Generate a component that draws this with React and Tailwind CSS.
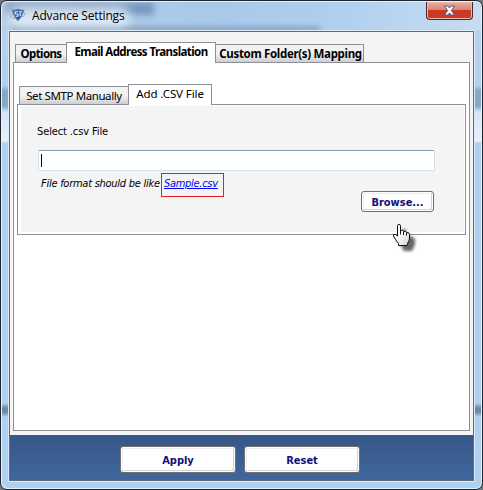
import { useState } from 'react';
import clsx from 'clsx';

function AppLogo() {
  return (
    <svg width="16" height="14" viewBox="0 0 16 14">
      <ellipse cx="8" cy="7" rx="7.3" ry="2.8" fill="none" stroke="#8996a8" strokeWidth="1" strokeDasharray="2 1" transform="rotate(-12 8 7)" />
      <path d="M1.500 1.5 Q5.500 2 8 0.500 Q10.500 2 14.500 1.500 Q13 8.500 8 13.500 Q3 8.500 1.500 1.500Z" fill="#7386a3" />
      <path d="M3.500 2.500 Q8 1.800 12.500 2.500 Q12 8 8 11.800 Q4 8 3.500 2.500Z" fill="#1f59ac" />
      <path d="M8 3.800 H5.200 V6 H8 V8.200 H5.800 M8.800 3.800 H11.800 M10.200 3.800 V8" fill="none" stroke="#e3efff" strokeWidth="1.100" />
    </svg>
  );
}

function CloseIcon() {
  return (
    <svg width="13" height="11" viewBox="0 0 13 11">
      <path
        d="M1.500 1 H4.800 L6.500 3 L8.200 1 H11.500 L8.400 5.500 L11.500 10 H8.200 L6.500 8 L4.800 10 H1.500 L4.600 5.500Z"
        fill="#fff"
        stroke="#5b5470"
        strokeWidth="1"
      />
    </svg>
  );
}

function HandCursor() {
  return (
    <svg className="absolute left-[392px] top-[222px] overflow-visible" width="25" height="30" viewBox="0 0 25 30">
      <defs>
        <linearGradient id="handFill" x1="0" y1="0" x2="1" y2="1">
          <stop offset="0.4" stopColor="#fff" />
          <stop offset="1" stopColor="#d0d0d0" />
        </linearGradient>
        <filter id="handShadow" x="-50%" y="-50%" width="220%" height="220%">
          <feDropShadow dx="5" dy="5" stdDeviation="1.8" floodColor="#000" floodOpacity="0.6" />
        </filter>
      </defs>
      <path
        filter="url(#handShadow)"
        d="M5.500 14 V3.500 Q5.500 2.500 7 2.500 Q8.500 2.500 8.500 3.500 V8.500 Q11.500 7.500 11.500 9.500 Q14.500 8.500 14.500 10.500 Q17.500 10 17.500 12.500 V16 Q17.500 18.500 16 20.500 L15 23.500 H6.500 V21.500 L4.500 19 L1.500 14 Q0.800 11.500 3.500 12.500Z"
        fill="url(#handFill)"
        stroke="#111"
        strokeLinejoin="round"
      />
      <path d="M8.500 8 V12.500 M11.500 9.500 V13 M14.500 10.500 V13.500" stroke="#111" fill="none" />
    </svg>
  );
}

function Tab({ label, active, onClick, className }) {
  return (
    <button
      onClick={onClick}
      className={clsx(
        'flex shrink-0 justify-center border border-[#8c8e99] leading-[16px] whitespace-nowrap text-black',
        active ? 'h-[21px] border-b-0 bg-white pt-px' : 'h-[19px] bg-linear-to-b from-[#f2f2f2] from-50% to-[#cfcfcf] pt-px',
        className
      )}
    >
      {label}
    </button>
  );
}

function Button({ children, className }) {
  return (
    <button
      className={clsx(
        'flex items-center justify-center rounded-[3px] border border-[#707070] bg-white pt-[3px] font-bold text-[#10107b] shadow-[inset_0_0_0_1px_#fff,inset_-2px_-2px_0_#d4d2d7,inset_2px_2px_0_#eeedf0]',
        className
      )}
    >
      {children}
    </button>
  );
}

export default function App() {
  const [tab, setTab] = useState('translation');
  const [innerTab, setInnerTab] = useState('csv');

  return (
    <div className="relative h-[490px] w-[483px] overflow-hidden bg-[#71747a]">
      <div className="flex h-[490px] w-[483px] flex-col rounded-[7px] border border-[#1c2430] bg-[#b3d2f1] bg-[linear-gradient(180deg,#bad2eb_0px,#b4d0ec_84px,#84a9c8_90px,#84a9c8_105px,#d5e5f4_111px,#e6f0fa_140px,#afd1f1_142px,#afd1f1_402px,#71879d_407px,#71879d_411px,#afd1f1_416px)] px-[8px] pb-[8px] shadow-[inset_0_0_0_1px_#e5f2fb]">
        {/* Title bar */}
        <div className="relative -mx-[7px] mt-px flex h-[28px] shrink-0 overflow-hidden rounded-t-[6px] bg-[linear-gradient(90deg,#b5cce4,#a9c9ea_45%,#acceee_65%,#c6dcf1)]">
          {/* Dark shapes blurred behind the glass frame */}
          <div className="absolute top-0 left-[4px] h-[13px] w-[148px] bg-[#3b5c8c] opacity-45 blur-[3px]" />
          <div className="absolute top-[24px] left-[10px] h-[5px] w-[308px] bg-[#47617f] opacity-35 blur-[2px]" />
          <div className="absolute top-[4px] left-[6px] h-[22px] w-[122px] rounded-full bg-[#e6eef7] opacity-80 blur-[5px]" />
          <div className="relative mt-[6px] ml-[8px]">
            <AppLogo />
          </div>
          <span className="relative mt-[5px] ml-[6px] font-['Open_Sans',sans-serif] text-[12px] leading-[17px] tracking-[-0.16px] text-black">
            Advance Settings
          </span>
          <div className="relative mr-[8px] ml-auto flex h-[18px] w-[47px] items-center justify-center rounded-b-[4px] border border-t-0 border-[#4b2733] bg-linear-to-b from-[#e8aca0] via-[#d88778] via-45% to-[#ca3a26] to-50% shadow-[inset_0_0_0_1px_#eeb8a8]">
            <CloseIcon />
          </div>
        </div>

        {/* Client area */}
        <div className="relative mt-px flex min-h-0 flex-1 flex-col border border-[#5c6c7c] bg-[#f4f4f4] shadow-[0_0_0_1px_#dcebf7]">
          <div className="flex h-[403px] shrink-0 flex-col px-[3px] pt-[10px]">
            <div className="z-10 -mb-px ml-[2px] flex h-[21px] shrink-0 items-end font-['Noto_Sans',sans-serif] text-[11.5px] font-bold">
              <Tab label="Options" active={tab === 'options'} onClick={() => setTab('options')} className="w-[52px] tracking-[-0.6px]" />
              <Tab label="Email Address Translation" active={tab === 'translation'} onClick={() => setTab('translation')} className="-ml-px w-[150px] tracking-[-0.58px]" />
              <Tab label="Custom Folder(s) Mapping" active={tab === 'mapping'} onClick={() => setTab('mapping')} className="-ml-px w-[149px] pl-[2px] tracking-[-0.32px]" />
            </div>

            <div className="flex h-[369px] w-[457px] shrink-0 flex-col border border-[#8c8e99] bg-white px-[3px] pt-[21px]">
              <div className="z-10 -mb-px ml-[2px] flex h-[21px] shrink-0 items-end font-['Noto_Sans',sans-serif] text-[11.5px]">
                <Tab label="Set SMTP Manually" active={innerTab === 'smtp'} onClick={() => setInnerTab('smtp')} className="w-[110px] tracking-[-0.4px]" />
                <Tab label="Add .CSV File" active={innerTab === 'csv'} onClick={() => setInnerTab('csv')} className="-ml-px w-[84px] tracking-[-0.1px]" />
              </div>

              <div className="h-[131px] w-[449px] shrink-0 border border-[#8c8e99] bg-white pt-px pr-px pb-[2px] pl-[3px]">
                <div className="h-full bg-[#f4f4f4] pt-[19px] pl-[16px] font-['DejaVu_Sans_Condensed','DejaVu_Sans',sans-serif] text-[11px]">
                  <label className="block h-[25px] leading-[14px] tracking-[-0.12px] text-black">Select .csv File</label>
                  <div className="ml-px flex h-[21px] w-[397px] rounded-[2px] border border-[#cfdfeb] border-t-[#879eb8] bg-white pt-[3px] pl-[2px]">
                    <div className="h-[13px] w-px bg-black" />
                  </div>
                  <div className="ml-[4px] flex items-start italic">
                    <span className="mt-[6px] w-[120px] leading-[14px] tracking-[-0.26px] whitespace-nowrap text-black">File format should be like</span>
                    <div className="mt-[2px] h-[24px] w-[63px] border border-[#ed1c24] pt-[3px] pl-[2px]">
                      <a href="#" className="block leading-[14px] tracking-[-0.3px] whitespace-nowrap text-[#0000ff] underline">Sample.csv</a>
                    </div>
                  </div>
                  <Button className="-mt-[6px] ml-[324px] h-[21px] w-[73px]">Browse...</Button>
                </div>
              </div>
            </div>
          </div>

          {/* Footer */}
          <div className="flex min-h-0 flex-1 gap-[8px] bg-linear-to-b from-[#365787] to-[#40679d] pt-[11px] pl-[110px] font-['DejaVu_Sans_Condensed','DejaVu_Sans',sans-serif] text-[11px]">
            <Button className="h-[27px] w-[116px]">Apply</Button>
            <Button className="h-[27px] w-[116px]">Reset</Button>
          </div>
        </div>
      </div>

      <HandCursor />
    </div>
  );
}
